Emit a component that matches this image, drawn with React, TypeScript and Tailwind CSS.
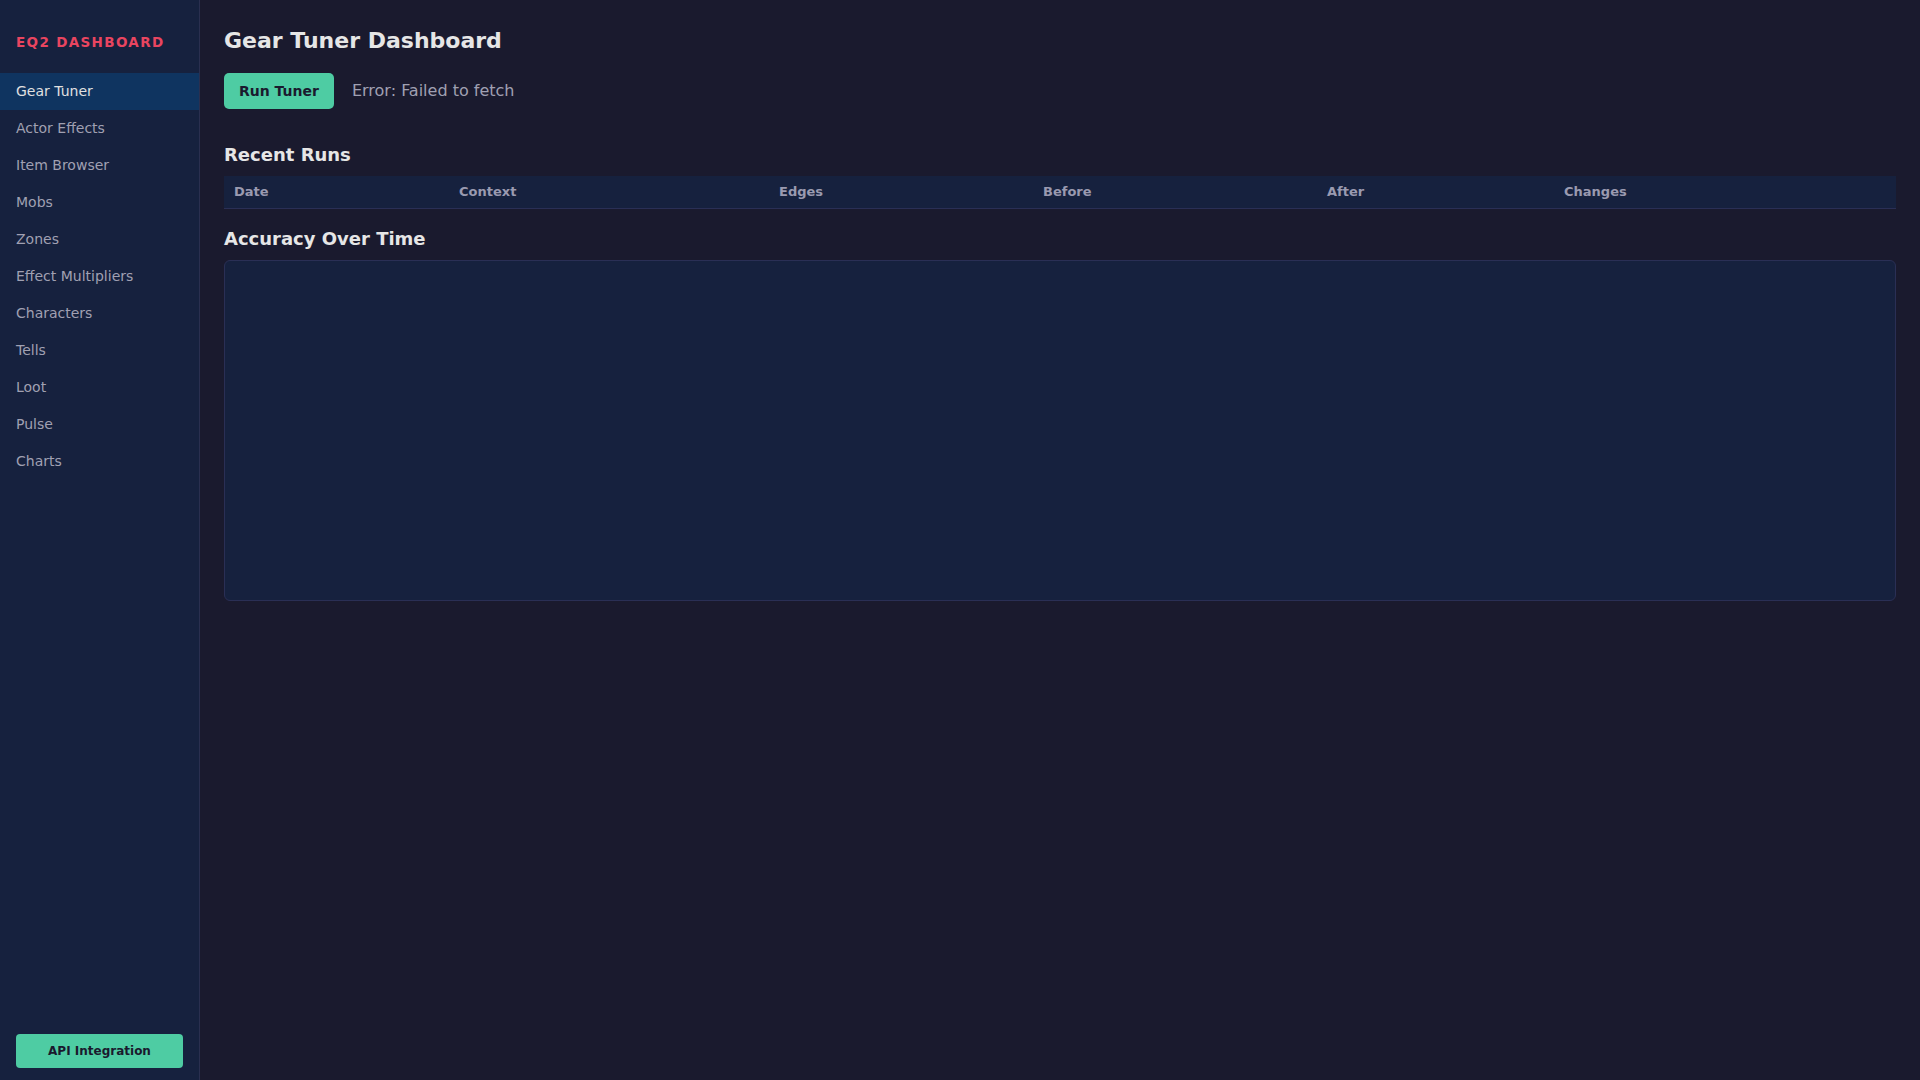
import React from "react";

const NAV_ITEMS = [
  "Gear Tuner",
  "Actor Effects",
  "Item Browser",
  "Mobs",
  "Zones",
  "Effect Multipliers",
  "Characters",
  "Tells",
  "Loot",
  "Pulse",
  "Charts",
];

const COLUMNS = [
  { label: "Date", width: "w-[225px]" },
  { label: "Context", width: "w-[320px]" },
  { label: "Edges", width: "w-[264px]" },
  { label: "Before", width: "w-[284px]" },
  { label: "After", width: "w-[237px]" },
  { label: "Changes", width: "w-[342px]" },
];

function Sidebar() {
  return (
    <aside className="flex h-full w-[200px] shrink-0 flex-col border-r border-[#2a2f4f] bg-[#16213e]">
      {/* Brand */}
      <div className="px-4 pt-8 text-[13.5px] font-bold uppercase leading-5 tracking-[0.1em] text-[#e94560]">
        EQ2 Dashboard
      </div>

      {/* Nav */}
      <nav className="mt-[21px] flex flex-col">
        {NAV_ITEMS.map((item, i) => (
          <div
            key={item}
            className={
              i === 0
                ? "flex h-[37px] items-center bg-[#0f3460] px-4 text-[14px] text-[#e0e0e0]"
                : "flex h-[37px] items-center px-4 text-[14px] text-[#a0a0b2]"
            }
          >
            {item}
          </div>
        ))}
      </nav>

      {/* Footer */}
      <div className="mt-auto px-4 pb-3">
        <button className="flex h-[34px] w-full items-center justify-center rounded-[4px] bg-[#4ecca3] text-[12px] font-bold text-[#1a1a2e]">
          API Integration
        </button>
      </div>
    </aside>
  );
}

export default function App() {
  return (
    <div className="flex h-screen w-full overflow-hidden bg-[#1a1a2e] font-['DejaVu_Sans',sans-serif]">
      <Sidebar />

      <main className="flex-1 px-6 pt-[25px]">
        <h1 className="text-[22px] font-bold leading-8 text-[#e6e6e6]">
          Gear Tuner Dashboard
        </h1>

        {/* Actions */}
        <div className="mt-4 flex items-center gap-[18px]">
          <button className="h-9 rounded-[5px] bg-[#4ecca3] px-[15px] text-[14px] font-bold text-[#1a1a2e]">
            Run Tuner
          </button>
          <span className="text-[16px] text-[#a0a0b2]">
            Error: Failed to fetch
          </span>
        </div>

        {/* Recent runs */}
        <h2 className="mt-[34px] text-[18px] font-bold leading-6 text-[#e6e6e6]">
          Recent Runs
        </h2>
        <table className="mt-[9px] w-full table-fixed border-collapse">
          <colgroup>
            {COLUMNS.map((c) => (
              <col key={c.label} className={c.width} />
            ))}
          </colgroup>
          <thead>
            <tr className="h-[32.5px] border-b border-[#2a2f55] bg-[#16213e]">
              {COLUMNS.map((c) => (
                <th
                  key={c.label}
                  className="px-2.5 text-left text-[13px] font-bold text-[#9a9ab0]"
                >
                  {c.label}
                </th>
              ))}
            </tr>
          </thead>
          <tbody />
        </table>

        {/* Chart */}
        <h2 className="mt-[18px] text-[18px] font-bold leading-6 text-[#e6e6e6]">
          Accuracy Over Time
        </h2>
        <div className="mt-[9px] h-[341px] w-full rounded-md border border-[#2a2f55] bg-[#16213e]" />
      </main>
    </div>
  );
}
